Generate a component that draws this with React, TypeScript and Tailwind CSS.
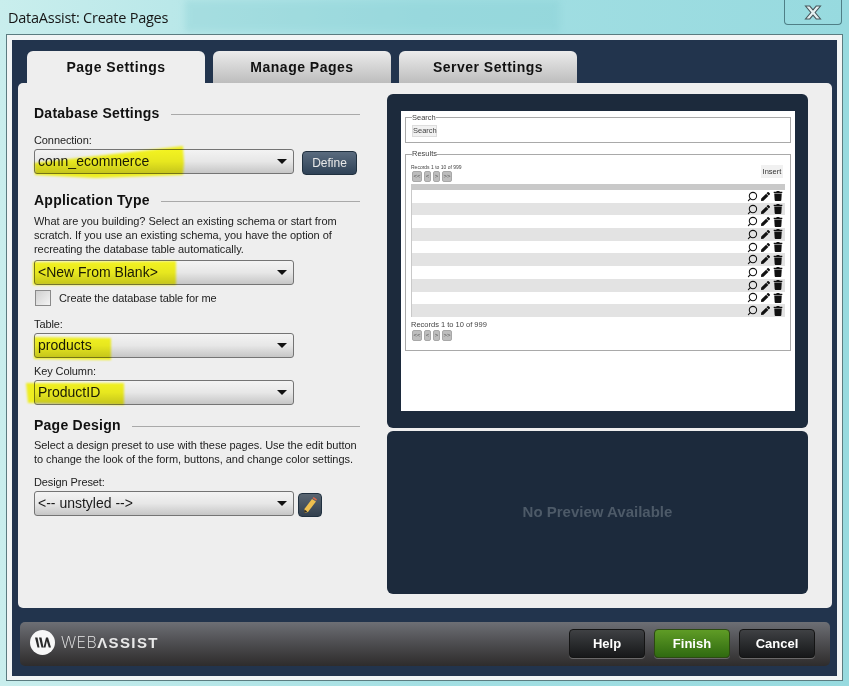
import React from 'react';
import { FaPen, FaTrash } from 'react-icons/fa';
import { Search } from 'lucide-react';

const Highlight = ({ points }: { points: string }) => (
    <svg className="absolute left-0 top-0 overflow-visible mix-blend-multiply blur-[1px]" width="260" height="25">
        <polygon points={points} fill="#ffff22" />
    </svg>
);

const Heading = ({ title }: { title: string }) => (
    <div className="flex items-center gap-[11px] h-5">
        <span className="-mt-[2px] text-[14px] font-bold tracking-[0.25px] text-[#111]">{title}</span>
        <span className="flex-1 h-px bg-[#a9a9a9]" />
    </div>
);

const Label = ({ children }: { children: React.ReactNode }) => (
    <div className="text-[11px] leading-[14px] tracking-[-0.1px] text-[#222]">{children}</div>
);

const Select = ({ value, points, className = '' }: { value: string; points?: string; className?: string }) => (
    <div className={`relative w-[260px] h-[25px] shrink-0 rounded-[3px] border border-[#747474] bg-gradient-to-b from-[#f3f3f3] via-[#e7e7e7] to-[#c6c6c6] ${className}`}>
        <div className="absolute left-[3px] top-[1px] text-[14px] leading-[20px] text-[#1a1a1a]">{value}</div>
        {points && <Highlight points={points} />}
        <div className="absolute right-[6px] top-[9px] w-0 h-0 border-x-[5px] border-x-transparent border-t-[5px] border-t-[#111]" />
    </div>
);

const PagerButton = ({ text, wide }: { text: string; wide?: boolean }) => (
    <span className={`flex items-center justify-center h-[11px] rounded-[2px] bg-[#bdbdbd] border border-[#a8a8a8] text-[6px] text-[#555] ${wide ? 'w-[10px]' : 'w-[7px]'}`}>{text}</span>
);

const Pager = () => (
    <div className="flex gap-[2px] ml-px">
        <PagerButton text="<<" wide />
        <PagerButton text="<" />
        <PagerButton text=">" />
        <PagerButton text=">>" wide />
    </div>
);

const rows = [0, 1, 2, 3, 4, 5, 6, 7, 8, 9];

const PreviewPage = () => (
    <div className="w-[394px] h-[300px] bg-white px-1 pt-[2px] font-['Liberation_Sans',sans-serif]">
        <fieldset className="h-[30px] border border-[#a9a9a9] px-[6px]">
            <legend className="text-[7.5px] leading-[9px] text-[#444]">Search</legend>
            <span className="block mt-[3px] w-[25px] h-[12px] bg-[#f1f1f1] border border-[#ddd] text-[7.5px] leading-[10px] text-center text-[#444]">Search</span>
        </fieldset>
        <fieldset className="mt-[7px] h-[201px] border border-[#a9a9a9] px-[5px]">
            <legend className="ml-px text-[7.5px] leading-[8px] text-[#444]">Results</legend>
            <div className="flex justify-between h-[26px]">
                <div>
                    <div className="text-[5px] leading-[8px] mt-[5px] text-[#444]">Records 1 to 10 of 999</div>
                    <Pager />
                </div>
                <span className="mt-[7px] mr-[2px] w-[22px] h-[13px] bg-[#f1f1f1] text-[7.5px] leading-[13px] text-center text-[#333]">Insert</span>
            </div>
            <div className="h-[6px] bg-[#c9c9c9]" />
            <div className="border-l border-[#c9c9c9]">
                {rows.map((row) => (
                    <div key={row} className={`flex justify-end items-center gap-[3px] pr-[2px] h-[12.7px] ${row % 2 ? 'bg-[#e3e3e3]' : 'bg-white'}`}>
                        <Search size={11} strokeWidth={2.3} className="-scale-x-100 text-[#111]" />
                        <FaPen size={9} className="text-[#111]" />
                        <FaTrash size={10} className="text-[#111]" />
                    </div>
                ))}
            </div>
            <div className="text-[7.5px] leading-[8px] mt-[4px] text-[#444]">Records 1 to 10 of 999</div>
            <div className="mt-[1px]"><Pager /></div>
        </fieldset>
    </div>
);

const FooterButton = ({ text, green }: { text: string; green?: boolean }) => (
    <div className={`w-[76px] h-[29px] flex items-center justify-center rounded-[4px] border text-[13px] font-bold text-white shadow-[0_1px_0_rgba(255,255,255,0.25)] ${green ? 'border-[#2c4a12] bg-gradient-to-b from-[#5f9c26] to-[#2f6a10]' : 'border-[#141414] bg-gradient-to-b from-[#3f4144] to-[#17181a]'}`}>
        {text}
    </div>
);

const Logo = () => (
    <svg className="-mt-[2px]" width="25" height="25" viewBox="0 0 25 25">
        <circle cx="12.5" cy="12.5" r="12.5" fill="#f7f7f7" />
        <path d="M5 7.5 L7.5 7.5 L9.5 17.5 L7.5 17.5 Z M9 7.5 L11.5 7.5 L13.5 17.5 L11.5 17.5 Z M13.5 17.5 L16 7.5 L18 7.5 L21 17.5 L18.8 17.5 L16.8 11 L15.5 17.5 Z" fill="#2b2b2b" />
    </svg>
);

const PencilIcon = () => (
    <svg width="16" height="18" viewBox="0 0 16 18">
        <path d="M10 3 L14 5.5 L6 16 L2 17 L2.4 13 Z" fill="#eebf4e" />
        <path d="M10.5 2.3 L11.6 1 L15 3.2 L14.2 4.8 Z" fill="#d9694a" />
        <path d="M2.4 13.6 L5.4 15.6 L2 17 Z" fill="#2a2a2a" />
    </svg>
);

export default function App() {
    return (
        <div className="relative w-[849px] h-[686px] overflow-hidden bg-gradient-to-r from-[#c9eeed] via-[#a3dfe3] to-[#97dadf] font-['Liberation_Sans',sans-serif]">
            {/* title bar */}
            <div className="relative h-[35px] pl-2 pt-[8px]">
                <div className="absolute left-[185px] top-0 w-[375px] h-[32px] bg-[#84cdd2] opacity-35 blur-[3px]" />
                <div className="relative text-[14.5px] leading-5 text-[#161616] font-['Open_Sans',sans-serif] tracking-[-0.25px]">DataAssist: Create Pages</div>
                <div className="absolute right-[7px] top-0 w-[58px] h-[25px] rounded-b-[4px] border border-t-0 border-[#4f7f86] flex items-center justify-center">
                    <svg width="18" height="15" viewBox="0 0 16 14">
                        <path d="M1 1 H5 L8 4.5 L11 1 H15 L10 7 L15 13 H11 L8 9.5 L5 13 H1 L6 7 Z" fill="#e6f1f2" stroke="#47575c" strokeWidth="1" />
                    </svg>
                </div>
            </div>

            {/* window body */}
            <div className="relative ml-[7px] w-[835px] h-[645px] border-[5px] border-b-[4px] border-[#f2f5f5] outline outline-1 outline-[#5b7c80]">
                <div className="h-[636px] bg-[#22344d] pt-[11px]">
                    <div className="flex gap-2 pl-[15px]">
                        <div className="w-[178px] h-[32px] pt-px rounded-t-[6px] bg-[#eeeeee] flex items-center justify-center text-[14px] font-bold tracking-[0.5px] text-[#111]">Page Settings</div>
                        <div className="w-[178px] h-[32px] pt-px rounded-t-[6px] bg-gradient-to-b from-[#ececec] to-[#bdbdbd] flex items-center justify-center text-[14px] font-bold tracking-[0.5px] text-[#111]">Manage Pages</div>
                        <div className="w-[178px] h-[32px] pt-px rounded-t-[6px] bg-gradient-to-b from-[#ececec] to-[#bdbdbd] flex items-center justify-center text-[14px] font-bold tracking-[0.5px] text-[#111]">Server Settings</div>
                    </div>

                    <div className="mx-[6px] w-[814px] h-[525px] rounded-[5px] bg-[#eeeeee] flex pl-4">
                        <div className="w-[326px] pt-[21px] shrink-0">
                            <Heading title="Database Settings" />
                            <div className="mt-[9px]"><Label>Connection:</Label></div>
                            <div className="flex items-start mt-[2px] gap-2">
                                <Select value="conn_ecommerce" points="-1,13 70,5 148,-4 149,13 148,25 60,28 0,25" />
                                <div className="mt-[2px] w-[55px] h-[24px] rounded-[4px] border border-[#20303f] bg-gradient-to-b from-[#5a6b7e] to-[#2f4257] flex items-center justify-center text-[12px] text-[#e8e8e8]">Define</div>
                            </div>

                            <div className="mt-[16px]"><Heading title="Application Type" /></div>
                            <p className="mt-[3px] text-[11px] leading-[14px] tracking-[-0.05px] text-[#222]">
                                What are you building? Select an existing schema or start from<br />
                                scratch. If you use an existing schema, you have the option of<br />
                                recreating the database table automatically.
                            </p>
                            <Select className="mt-[4px]" value="<New From Blank>" points="-2,1 141,0 141,24 -2,24" />
                            <div className="flex items-center mt-[5px] ml-px h-4 gap-2">
                                <span className="w-4 h-4 border border-[#8a8a8a] bg-gradient-to-br from-[#cfcfcf] to-[#f4f4f4]" />
                                <span className="text-[11px] tracking-[-0.1px] text-[#222]">Create the database table for me</span>
                            </div>

                            <div className="mt-[11px]"><Label>Table:</Label></div>
                            <Select className="mt-[2px]" value="products" points="-1,3 76,4 76,26 -1,25" />
                            <div className="mt-[6px]"><Label>Key Column:</Label></div>
                            <Select className="mt-[2px]" value="ProductID" points="-9,2 89,2 89,24 -7,22" />

                            <div className="mt-[11px]"><Heading title="Page Design" /></div>
                            <p className="mt-[2px] text-[11px] leading-[14px] tracking-[-0.05px] text-[#222]">
                                Select a design preset to use with these pages. Use the edit button<br />
                                to change the look of the form, buttons, and change color settings.
                            </p>
                            <div className="mt-[9px]"><Label>Design Preset:</Label></div>
                            <div className="flex items-start mt-[2px] gap-1">
                                <Select value="<-- unstyled -->" />
                                <div className="mt-[2px] w-[24px] h-[24px] rounded-[4px] border border-[#20303f] bg-gradient-to-b from-[#5a6672] to-[#33404e] flex items-center justify-center">
                                    <PencilIcon />
                                </div>
                            </div>
                        </div>

                        <div className="ml-[27px] w-[421px] pt-[11px]">
                            <div className="h-[334px] rounded-[6px] bg-[#1c2a3c] pt-[17px] pl-[14px]">
                                <PreviewPage />
                            </div>
                            <div className="mt-[3px] h-[163px] rounded-[6px] bg-[#1c2a3c] flex items-center justify-center text-[15px] font-bold text-[#4d5a68]">
                                No Preview Available
                            </div>
                        </div>
                    </div>

                    <div className="mt-[14px] ml-[8px] w-[810px] h-[44px] pb-[1px] rounded-[5px] bg-gradient-to-b from-[#6d6f75] to-[#2e2c2c] flex items-center pl-[10px] pr-[15px]">
                        <Logo />
                        <div className="-mt-[2px] ml-[6px] text-[15px] leading-5 text-[#e8e8e8]">
                            <span className="font-['Inter',sans-serif] font-extralight text-[16px] tracking-[0.4px]">WEB</span>
                            <span className="font-bold tracking-[1.4px]">ΛSSIST</span>
                        </div>
                        <div className="ml-auto flex gap-[9px]">
                            <FooterButton text="Help" />
                            <FooterButton text="Finish" green />
                            <FooterButton text="Cancel" />
                        </div>
                    </div>
                </div>
            </div>
        </div>
    );
}
